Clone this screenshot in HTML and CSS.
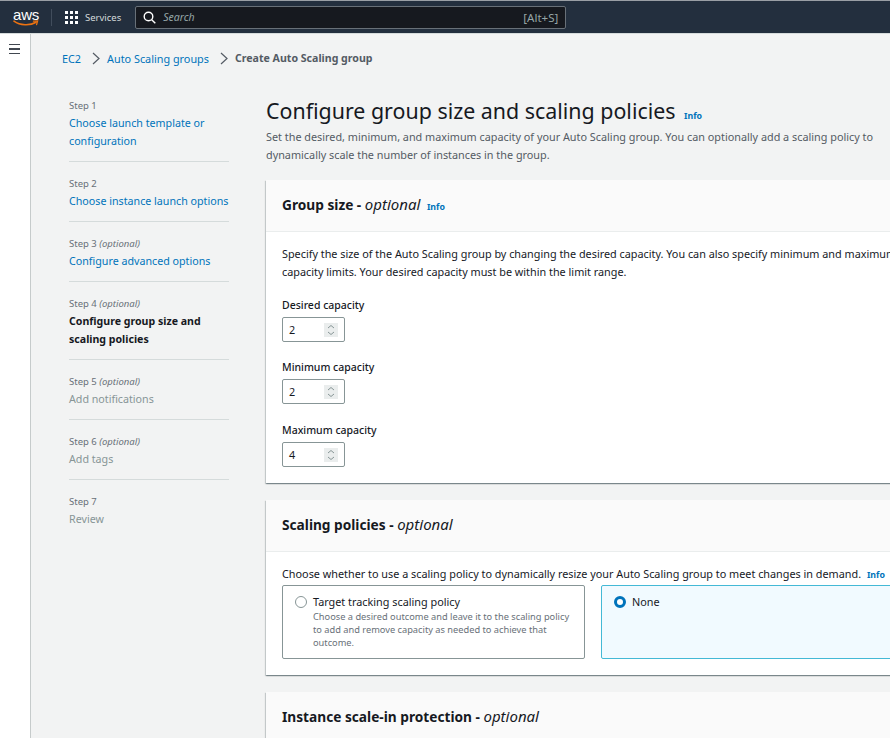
FILE: index.html
```html
<!DOCTYPE html>
<html>
    <head>
        <title>Create Auto Scaling group</title>
        <link rel="stylesheet" href="styles.css">
    </head>
    <body>
        <!-- top bar -->
        <header class="topbar">
            <div class="logo">
                <span class="logo-text">aws</span>
                <svg class="logo-smile" width="26" height="7" viewBox="0 0 26 7">
                    <path d="M1 1.2C7 5.6 17 6 23 2.2" fill="none" stroke="#ec7211" stroke-width="1.6" stroke-linecap="round"/>
                    <path d="M20.5 1.2L24.6 1 23.6 4.6" fill="none" stroke="#ec7211" stroke-width="1.3" stroke-linecap="round"/>
                </svg>
            </div>
            <div class="topbar-divider"></div>
            <div class="services">
                <div class="grid-icon">
                    <i></i><i></i><i></i><i></i><i></i><i></i><i></i><i></i><i></i>
                </div>
                <span>Services</span>
            </div>
            <div class="search">
                <svg width="13" height="13" viewBox="0 0 13 13">
                    <circle cx="5.5" cy="5.5" r="4.3" fill="none" stroke="#fff" stroke-width="1.4"/>
                    <path d="M8.7 8.7L12.3 12.3" stroke="#fff" stroke-width="1.4"/>
                </svg>
                <span class="search-text">Search</span>
                <span class="search-key">[Alt+S]</span>
            </div>
        </header>

        <div class="page">
            <aside class="sidestrip">
                <div class="hamburger"><i></i><i></i><i></i></div>
            </aside>

            <main class="content">
                <nav class="breadcrumb">
                    <a>EC2</a>
                    <svg class="crumb-arrow" width="8" height="13" viewBox="0 0 8 13"><path d="M1 1L7 6.5 1 12" fill="none" stroke="#545b64" stroke-width="1.2"/></svg>
                    <a>Auto Scaling groups</a>
                    <svg class="crumb-arrow" width="8" height="13" viewBox="0 0 8 13"><path d="M1 1L7 6.5 1 12" fill="none" stroke="#545b64" stroke-width="1.2"/></svg>
                    <span class="crumb-current">Create Auto Scaling group</span>
                </nav>

                <div class="wizard">
                    <ul class="steps">
                        <li class="step">
                            <div class="step-label">Step 1</div>
                            <a class="step-link">Choose launch template or configuration</a>
                        </li>
                        <li class="step">
                            <div class="step-label">Step 2</div>
                            <a class="step-link">Choose instance launch options</a>
                        </li>
                        <li class="step">
                            <div class="step-label">Step 3 <em>(optional)</em></div>
                            <a class="step-link">Configure advanced options</a>
                        </li>
                        <li class="step">
                            <div class="step-label">Step 4 <em>(optional)</em></div>
                            <span class="step-link step-active">Configure group size and scaling policies</span>
                        </li>
                        <li class="step">
                            <div class="step-label">Step 5 <em>(optional)</em></div>
                            <span class="step-link step-disabled">Add notifications</span>
                        </li>
                        <li class="step">
                            <div class="step-label">Step 6 <em>(optional)</em></div>
                            <span class="step-link step-disabled">Add tags</span>
                        </li>
                        <li class="step">
                            <div class="step-label">Step 7</div>
                            <span class="step-link step-disabled">Review</span>
                        </li>
                    </ul>

                    <div class="form">
                        <h1 class="page-title">Configure group size and scaling policies <a class="info">Info</a></h1>
                        <p class="page-desc">Set the desired, minimum, and maximum capacity of your Auto Scaling group. You can optionally add a scaling policy to dynamically scale the number of instances in the group.</p>

                        <section class="card">
                            <div class="card-header">
                                <h2>Group size - <em>optional</em> <a class="info">Info</a></h2>
                            </div>
                            <div class="card-body size-body">
                                <p class="card-text">Specify the size of the Auto Scaling group by changing the desired capacity. You can also specify minimum and maximum capacity limits. Your desired capacity must be within the limit range.</p>
                                <div class="field">
                                    <label>Desired capacity</label>
                                    <div class="number-input">
                                        <span>2</span>
                                        <div class="spinner"><svg width="10" height="12" viewBox="0 0 10 12"><path d="M2 4L5 1.5 8 4M2 8L5 10.5 8 8" fill="none" stroke="#879596" stroke-width="1"/></svg></div>
                                    </div>
                                </div>
                                <div class="field">
                                    <label>Minimum capacity</label>
                                    <div class="number-input">
                                        <span>2</span>
                                        <div class="spinner"><svg width="10" height="12" viewBox="0 0 10 12"><path d="M2 4L5 1.5 8 4M2 8L5 10.5 8 8" fill="none" stroke="#879596" stroke-width="1"/></svg></div>
                                    </div>
                                </div>
                                <div class="field field-last">
                                    <label>Maximum capacity</label>
                                    <div class="number-input">
                                        <span>4</span>
                                        <div class="spinner"><svg width="10" height="12" viewBox="0 0 10 12"><path d="M2 4L5 1.5 8 4M2 8L5 10.5 8 8" fill="none" stroke="#879596" stroke-width="1"/></svg></div>
                                    </div>
                                </div>
                            </div>
                        </section>

                        <section class="card">
                            <div class="card-header">
                                <h2>Scaling policies - <em>optional</em></h2>
                            </div>
                            <div class="card-body policy-body">
                                <p class="card-text policy-text">Choose whether to use a scaling policy to dynamically resize your Auto Scaling group to meet changes in demand. <a class="info">Info</a></p>
                                <div class="tiles">
                                    <div class="tile">
                                        <span class="radio"></span>
                                        <div>
                                            <div class="tile-title">Target tracking scaling policy</div>
                                            <div class="tile-desc">Choose a desired outcome and leave it to the scaling policy to add and remove capacity as needed to achieve that outcome.</div>
                                        </div>
                                    </div>
                                    <div class="tile tile-selected">
                                        <span class="radio radio-on"></span>
                                        <div>
                                            <div class="tile-title">None</div>
                                        </div>
                                    </div>
                                </div>
                            </div>
                        </section>

                        <section class="card">
                            <div class="card-header">
                                <h2>Instance scale-in protection - <em>optional</em></h2>
                            </div>
                        </section>
                    </div>
                </div>
            </main>
        </div>
    </body>
</html>
```

FILE: styles.css
```css
html, body {
    height: 100%;
}
body {
    margin: 0;
    overflow: hidden;
    background: #f2f3f3;
    color: #16191f;
    font-family: "Noto Sans", Arial, sans-serif;
    font-size: 10.83px;
}
a {
    color: #0073bb;
}
p, h1, h2, ul {
    margin: 0;
    padding: 0;
}

/* top bar */
.topbar {
    display: flex;
    align-items: center;
    height: 32px;
    padding-left: 13px;
    background: #232f3e;
    border-top: 1px solid #9a9fa5;
    border-bottom: 1px solid #d5dbdb;
}
.logo {
    display: flex;
    flex-direction: column;
    width: 26px;
}
.logo-text {
    color: #fff;
    font-family: "Liberation Sans", Arial, sans-serif;
    font-size: 15px;
    line-height: 13px;
    letter-spacing: -0.2px;
}
.logo-smile {
    margin-top: -1px;
}
.topbar-divider {
    width: 1px;
    height: 17px;
    margin: 0 13px 0 12px;
    background: #414d5c;
}
.services {
    display: flex;
    align-items: center;
    gap: 7px;
    color: #d5dbdb;
    font-size: 9.5px;
}
.grid-icon {
    display: grid;
    grid-template-columns: repeat(3, 3px);
    gap: 2px;
}
.grid-icon i {
    width: 3px;
    height: 3px;
    background: #fff;
}
.search {
    display: flex;
    align-items: center;
    width: 431px;
    height: 23px;
    box-sizing: border-box;
    margin-left: 14px;
    padding: 0 7px 0 7px;
    background: #16191f;
    border: 1px solid #687078;
    border-radius: 2px;
    color: #95a5a6;
}
.search-text {
    margin-left: 7px;
    flex: 1;
    font-style: italic;
    font-size: 10.5px;
}
.search-key {
    font-size: 11.5px;
}

/* page */
.page {
    display: flex;
    height: 704px;
}
.sidestrip {
    flex: none;
    width: 30px;
    background: #fff;
    border-right: 1px solid #c6cbcb;
}
.hamburger {
    display: flex;
    flex-direction: column;
    gap: 3px;
    width: 11px;
    margin: 10px 0 0 9px;
}
.hamburger i {
    height: 1.4px;
    background: #414750;
}
.content {
    flex: 1;
    padding: 0 0 0 31px;
    min-width: 0;
}

/* breadcrumb */
.breadcrumb {
    display: flex;
    align-items: center;
    height: 18px;
    margin-top: 15px;
}
.breadcrumb a {
    color: #0073bb;
}
.crumb-arrow {
    margin: 0 7px 0 11px;
}
.crumb-current {
    color: #545b64;
    font-size: 10.6px;
    font-weight: 700;
}

/* wizard */
.wizard {
    display: flex;
    gap: 37px;
    margin-top: 31px;
}
.steps {
    flex: none;
    width: 160px;
    margin-left: 7px;
    list-style: none;
}
.step {
    padding: 14px 0 11px;
    border-bottom: 1px solid #d5dbdb;
}
.step:first-child {
    padding-top: 0;
}
.step:last-child {
    border-bottom: none;
}
.step-label {
    height: 16px;
    line-height: 16px;
    font-size: 9.5px;
    color: #687078;
}
.step-link {
    display: block;
    line-height: 18px;
    font-size: 10.7px;
    color: #0073bb;
}
.step-active {
    color: #16191f;
    font-size: 10.6px;
    font-weight: 700;
}
.step-disabled {
    color: #879596;
}

/* form */
.form {
    flex: none;
    width: 660px;
}
.page-title {
    font-size: 21.4px;
    font-weight: 400;
    line-height: 26px;
}
.info {
    font-size: 8.8px;
    font-weight: 700;
    font-style: normal;
    margin-left: 3px;
}
.page-desc {
    margin-top: -1px;
    width: 640px;
    line-height: 18px;
    color: #545b64;
}
.card {
    margin-top: 17px;
    background: #fff;
    box-shadow: 0 1px 1px 0 rgba(0, 28, 36, 0.3), 1px 1px 1px 0 rgba(0, 28, 36, 0.15), -1px 1px 1px 0 rgba(0, 28, 36, 0.15);
}
.page-desc + .card {
    margin-top: 16px;
}
.card-header {
    height: 47px;
    display: flex;
    align-items: center;
    padding: 0 16px 4px;
    background: #fafafa;
    border-bottom: 1px solid #eaeded;
}
.card-header h2 {
    font-size: 13.7px;
    font-weight: 700;
}
.card-header h2 em {
    font-size: 15px;
    font-weight: 400;
}
.card-body {
    padding: 13px 16px 16px;
}
.card-text {
    line-height: 18px;
}
.field {
    margin-top: 16px;
}
.field:first-of-type {
    margin-top: 15px;
}
.field label {
    display: block;
    height: 18px;
    line-height: 18px;
    font-size: 10.5px;
    font-weight: 500;
}
.field-last {
    margin-top: 17px;
}
.number-input {
    display: flex;
    align-items: center;
    justify-content: space-between;
    width: 63px;
    height: 25px;
    margin-top: 3px;
    padding: 0 6px;
    box-sizing: border-box;
    border: 1px solid #879596;
    border-radius: 2px;
    background: #fff;
}
.spinner {
    display: flex;
    align-items: center;
    justify-content: center;
    width: 14px;
    height: 14px;
    background: #eaeded;
}
.policy-text {
    white-space: nowrap;
}
.tiles {
    display: flex;
    gap: 16px;
    margin-top: 1px;
}
.tile {
    display: flex;
    gap: 6px;
    flex: none;
    width: 303px;
    height: 74px;
    box-sizing: border-box;
    padding: 7px 12px;
    border: 1px solid #879596;
    border-radius: 2px;
}
.tile-selected {
    background: #f1faff;
    border-color: #44b9d6;
}
.tile-title {
    line-height: 18px;
}
.tile-desc {
    margin-top: -1px;
    line-height: 13px;
    font-size: 9.25px;
    color: #687078;
}
.radio {
    flex: none;
    box-sizing: border-box;
    width: 12px;
    height: 12px;
    margin-top: 3px;
    border: 1px solid #879596;
    border-radius: 50%;
    background: #fff;
}
.radio-on {
    border: 3.5px solid #0073bb;
}
```
